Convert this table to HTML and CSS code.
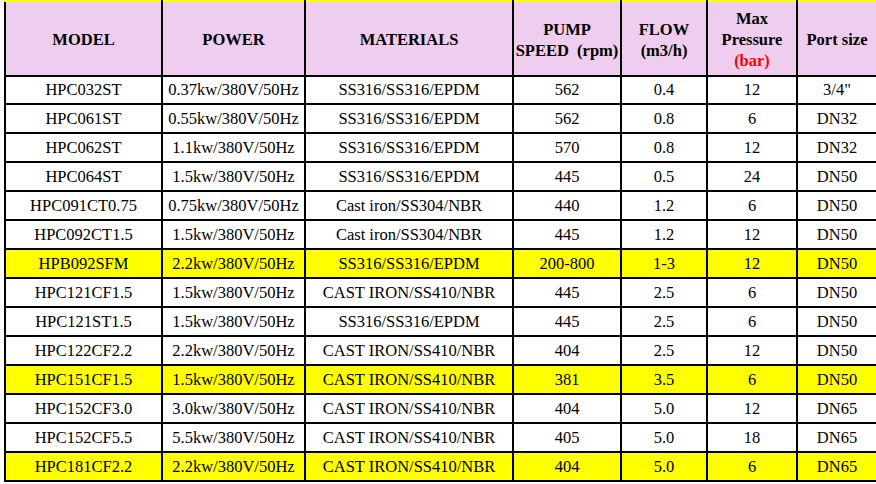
FILE: index.html
```html
<!DOCTYPE html>
<html>
<head>
<meta charset="utf-8">
<link rel="stylesheet" href="styles.css">
</head>
<body>
<table class="spec">
  <colgroup>
    <col class="c-model"><col class="c-power"><col class="c-mat"><col class="c-speed"><col class="c-flow"><col class="c-press"><col class="c-port">
  </colgroup>
  <thead>
    <tr>
      <th>MODEL</th>
      <th>POWER</th>
      <th>MATERIALS</th>
      <th>PUMP<br>SPEED&nbsp;&nbsp;(rpm)</th>
      <th>FLOW<br>(m3/h)</th>
      <th>Max<br>Pressure<br><span class="red">(bar)</span></th>
      <th>Port size</th>
    </tr>
  </thead>
  <tbody>
    <tr class="first"><td>HPC032ST</td><td>0.37kw/380V/50Hz</td><td>SS316/SS316/EPDM</td><td>562</td><td>0.4</td><td>12</td><td>3/4"</td></tr>
    <tr><td>HPC061ST</td><td>0.55kw/380V/50Hz</td><td>SS316/SS316/EPDM</td><td>562</td><td>0.8</td><td>6</td><td>DN32</td></tr>
    <tr><td>HPC062ST</td><td>1.1kw/380V/50Hz</td><td>SS316/SS316/EPDM</td><td>570</td><td>0.8</td><td>12</td><td>DN32</td></tr>
    <tr><td>HPC064ST</td><td>1.5kw/380V/50Hz</td><td>SS316/SS316/EPDM</td><td>445</td><td>0.5</td><td>24</td><td>DN50</td></tr>
    <tr><td>HPC091CT0.75</td><td>0.75kw/380V/50Hz</td><td>Cast iron/SS304/NBR</td><td>440</td><td>1.2</td><td>6</td><td>DN50</td></tr>
    <tr><td>HPC092CT1.5</td><td>1.5kw/380V/50Hz</td><td>Cast iron/SS304/NBR</td><td>445</td><td>1.2</td><td>12</td><td>DN50</td></tr>
    <tr class="hl"><td>HPB092SFM</td><td>2.2kw/380V/50Hz</td><td>SS316/SS316/EPDM</td><td>200-800</td><td>1-3</td><td>12</td><td>DN50</td></tr>
    <tr><td>HPC121CF1.5</td><td>1.5kw/380V/50Hz</td><td>CAST IRON/SS410/NBR</td><td>445</td><td>2.5</td><td>6</td><td>DN50</td></tr>
    <tr><td>HPC121ST1.5</td><td>1.5kw/380V/50Hz</td><td>SS316/SS316/EPDM</td><td>445</td><td>2.5</td><td>6</td><td>DN50</td></tr>
    <tr><td>HPC122CF2.2</td><td>2.2kw/380V/50Hz</td><td>CAST IRON/SS410/NBR</td><td>404</td><td>2.5</td><td>12</td><td>DN50</td></tr>
    <tr class="hl"><td>HPC151CF1.5</td><td>1.5kw/380V/50Hz</td><td>CAST IRON/SS410/NBR</td><td>381</td><td>3.5</td><td>6</td><td>DN50</td></tr>
    <tr><td>HPC152CF3.0</td><td>3.0kw/380V/50Hz</td><td>CAST IRON/SS410/NBR</td><td>404</td><td>5.0</td><td>12</td><td>DN65</td></tr>
    <tr><td>HPC152CF5.5</td><td>5.5kw/380V/50Hz</td><td>CAST IRON/SS410/NBR</td><td>405</td><td>5.0</td><td>18</td><td>DN65</td></tr>
    <tr class="hl"><td>HPC181CF2.2</td><td>2.2kw/380V/50Hz</td><td>CAST IRON/SS410/NBR</td><td>404</td><td>5.0</td><td>6</td><td>DN65</td></tr>
  </tbody>
</table>
</body>
</html>
```
FILE: styles.css
```css
html, body {
  margin: 0;
  padding: 0;
  background: #ffffff;
}
body {
  padding-left: 4px;
  font-family: "Liberation Serif", "Times New Roman", serif;
  color: #000;
}
.spec {
  border-collapse: collapse;
  table-layout: fixed;
  width: 872px;
  border: 2px solid #000;
  font-size: 16.5px;
}
.c-model { width: 157px; }
.c-power { width: 143px; }
.c-mat { width: 208px; }
.c-speed { width: 108px; }
.c-flow { width: 86px; }
.c-press { width: 90px; }
.c-port { width: 80px; }
.spec th, .spec td {
  border: 2px solid #000;
  padding: 0;
  text-align: center;
  vertical-align: middle;
  white-space: nowrap;
  overflow: hidden;
}
.spec thead th {
  background: #efcdef;
  font-weight: bold;
  line-height: 21px;
  height: 71px;
  padding-top: 2px;
  border-top-color: #ffff00;
}
.spec td {
  height: 27px;
  line-height: 18px;
}
.spec tr.first td {
  height: 26px;
}
.spec tr.hl td {
  background: #ffff00;
}
.red {
  color: #ff0000;
}
```
